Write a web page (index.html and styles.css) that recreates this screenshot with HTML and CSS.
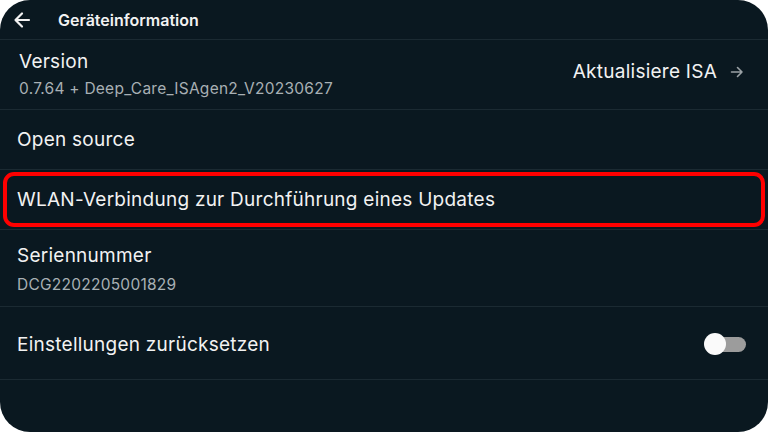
FILE: index.html
```html
<!DOCTYPE html>
<html>
<head>
<meta charset="utf-8">
<link rel="stylesheet" href="styles.css">
</head>
<body>
<div class="screen">
  <header class="topbar">
    <svg class="back" width="20" height="20" viewBox="0 0 20 20"><path d="M17 10H4M10 3.5L3.5 10L10 16.5" fill="none" stroke="#f2f2f2" stroke-width="2.2" stroke-linecap="round" stroke-linejoin="round"/></svg>
    <span class="title">Geräteinformation</span>
  </header>
  <div class="row row-version">
    <div class="texts">
      <div class="label">Version</div>
      <div class="sub">0.7.64 + Deep_Care_ISAgen2_V20230627</div>
    </div>
    <div class="action">
      <span>Aktualisiere ISA</span>
      <svg width="14" height="14" viewBox="0 0 14 14"><path d="M1.5 7H12M7.5 2.5L12 7L7.5 11.5" fill="none" stroke="#9aa1a5" stroke-width="1.6" stroke-linecap="round" stroke-linejoin="round"/></svg>
    </div>
  </div>
  <div class="row row-open">
    <div class="label">Open source</div>
  </div>
  <div class="row row-wlan">
    <div class="highlight">
      <span class="label">WLAN-Verbindung zur Durchführung eines Updates</span>
    </div>
  </div>
  <div class="row row-serial">
    <div class="texts">
      <div class="label">Seriennummer</div>
      <div class="sub">DCG2202205001829</div>
    </div>
  </div>
  <div class="row row-reset">
    <div class="label">Einstellungen zurücksetzen</div>
    <div class="toggle"><span class="knob"></span></div>
  </div>
</div>
</body>
</html>
```
FILE: styles.css
```css
* { box-sizing: border-box; }
html, body { margin: 0; padding: 0; background: #ffffff; }
body { width: 768px; height: 432px; overflow: hidden; font-family: Inter, "Noto Sans", sans-serif; }
.screen {
  width: 768px; height: 432px;
  background: #0a1820;
  border-radius: 30px;
  overflow: hidden;
  color: #f2f2f2;
}
.topbar {
  height: 40px;
  display: flex; align-items: center;
  padding-left: 12px;
  border-bottom: 1px solid #1b2a32;
}
.back { display: block; }
.title {
  margin-left: 26px;
  font-size: 16px; font-weight: 600;
  color: #f2f2f2;
}
.row {
  display: flex; align-items: center;
  border-bottom: 1px solid #1b2a32;
  padding: 0 18px;
}
.label { font-size: 19px; line-height: 22px; letter-spacing: 0.25px; color: #f2f2f2; }
.sub { font-size: 15.5px; line-height: 18px; letter-spacing: 0.25px; color: #a8b0b4; margin-top: 7px; }
.row-version { height: 70px; padding-left: 19px; }
.row-version .texts { flex: 1; margin-top: 0px; }
.action { display: flex; align-items: center; gap: 13px; font-size: 19px; letter-spacing: 0.25px; padding-right: 6px; margin-top: -6px; }
.action svg { display: block; }
.row-open { height: 60px; padding-left: 17px; padding-bottom: 0px; }
.row-wlan { height: 60px; padding: 0 3px; }
.highlight {
  flex: 1; height: 55px;
  border: 4px solid #ff0000;
  border-radius: 11px;
  display: flex; align-items: center;
  padding-left: 10px;
  white-space: nowrap;
}
.row-serial { height: 77px; padding-left: 17px; }
.row-serial .texts { margin-top: 2px; }
.row-serial .sub { margin-top: 9px; }
.row-reset { height: 73px; padding-left: 17px; justify-content: space-between; padding-right: 22px; }
.row-reset .label { margin-top: 3px; }
.toggle {
  position: relative;
  width: 41px; height: 15px;
  border-radius: 8px;
  background: #9c9c9c;
  margin-top: 3px;
}
.knob {
  position: absolute; left: -1px; top: -4px;
  width: 22px; height: 22px; border-radius: 50%;
  background: #fafafa;
}
```
